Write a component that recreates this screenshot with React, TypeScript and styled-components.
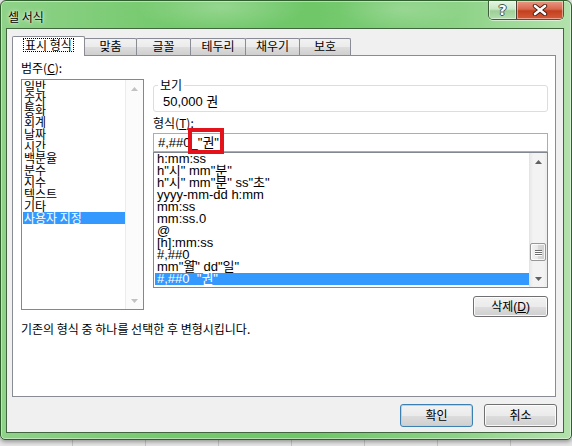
import React from 'react';
import styled, { createGlobalStyle } from 'styled-components';

const GlobalStyle = createGlobalStyle`
  html, body { margin: 0; padding: 0; }
  body {
    width: 572px;
    height: 446px;
    overflow: hidden;
    font-family: "Liberation Sans", "Noto Sans CJK KR", sans-serif;
    font-size: 12px;
    color: #000;
    background: #e6e6e6 repeating-linear-gradient(90deg, transparent 0 72px, #c4c4c4 72px 73px);
  }
`;

const Window = styled.div`
  box-sizing: border-box;
  width: 572px;
  height: 440px;
  display: flex;
  flex-direction: column;
  padding: 0 7px 6px 5px;
  border: 1px solid #2f5f2c;
  border-radius: 6px 6px 5px 5px;
  background:
    radial-gradient(ellipse 120px 36px at 220px 6px, rgba(255, 255, 255, 0.25), transparent 70%),
    radial-gradient(ellipse 90px 30px at 400px 8px, rgba(255, 255, 255, 0.18), transparent 70%),
    linear-gradient(90deg, #8fd289 0%, #74c96c 30%, #6fc768 55%, #8cd286 80%, #b3e2ac 100%);
  box-shadow: inset 0 0 0 1px rgba(255, 255, 255, 0.45), 0 2px 4px rgba(0, 0, 0, 0.35);
`;

const TitleBar = styled.div`
  flex: none;
  height: 27px;
  display: flex;
  align-items: flex-start;
  justify-content: space-between;
`;

const Title = styled.div`
  margin: 9px 0 0 2px;
  line-height: 14px;
  font-family: "Noto Sans CJK KR", sans-serif;
  text-shadow: 0 0 5px rgba(255, 255, 255, 0.95), 0 0 2px rgba(255, 255, 255, 0.9);
`;

const CaptionGroup = styled.div`
  display: flex;
  height: 18px;
  border: 1px solid #3f5d3d;
  border-top: none;
  border-radius: 0 0 5px 5px;
  overflow: hidden;
  box-shadow: 0 1px 0 rgba(255, 255, 255, 0.55);
`;

const CaptionButton = styled.div<{ $close?: boolean }>`
  width: ${p => (p.$close ? 46 : 27)}px;
  display: flex;
  align-items: center;
  justify-content: center;
  border-left: ${p => (p.$close ? '1px solid #4a3a30' : 'none')};
  background: ${p =>
    p.$close
      ? 'linear-gradient(#e99a86 0%, #d9694e 45%, #c2401f 55%, #d65a38 100%)'
      : 'linear-gradient(rgba(255,255,255,0.75) 0%, rgba(235,245,233,0.55) 45%, rgba(160,200,155,0.55) 55%, rgba(190,225,185,0.7) 100%)'};
  box-shadow: inset 0 0 0 1px rgba(255, 255, 255, 0.45);
`;

const HelpMark = styled.span`
  font: bold 14px "DejaVu Sans", sans-serif;
  line-height: 14px;
  color: #fff;
  text-shadow: 1px 0 0 #43573f, -1px 0 0 #43573f, 0 1px 0 #43573f, 0 -1px 0 #43573f;
`;

const Client = styled.div`
  box-sizing: border-box;
  flex: 1;
  display: flex;
  flex-direction: column;
  border: 1px solid #41663f;
  background: #f0f0f0;
  padding: 7px 6px 5px 5px;
`;

const TabStrip = styled.div`
  flex: none;
  height: 19px;
  display: flex;
  align-items: flex-end;
  position: relative;
  z-index: 1;
`;

const Tab = styled.div<{ $w: number; $active?: boolean }>`
  box-sizing: border-box;
  width: ${p => p.$w}px;
  height: ${p => (p.$active ? 20 : 17)}px;
  margin-bottom: ${p => (p.$active ? -1 : 0)}px;
  margin-left: ${p => (p.$active ? 0 : -1)}px;
  position: relative;
  z-index: ${p => (p.$active ? 2 : 1)};
  border: 1px solid #898c95;
  border-bottom: none;
  border-radius: 2px 2px 0 0;
  background: ${p =>
    p.$active ? '#fff' : 'linear-gradient(#f2f2f2 0%, #ebebeb 50%, #dddddd 51%, #cfcfcf 100%)'};
  padding-top: ${p => (p.$active ? 1 : 0)}px;
  text-align: center;
  line-height: 14px;
  font-family: "Noto Sans CJK KR", sans-serif;
  white-space: nowrap;
`;

const FocusLabel = styled.span`
  display: inline-block;
  line-height: 12px;
  padding: 0 1px;
  border: 1px dotted #000;
`;

const Panel = styled.div`
  box-sizing: border-box;
  height: 342px;
  margin-right: 1px;
  border: 1px solid #898c95;
  background: #fff;
  padding: 5px 7px 0 8px;
  display: flex;
  flex-direction: column;
`;

const Label = styled.div<{ $mt?: number }>`
  line-height: 14px;
  margin-top: ${p => p.$mt ?? 0}px;
  font-family: "Noto Sans CJK KR", sans-serif;
  white-space: nowrap;
  u { text-decoration: underline; text-underline-offset: 1px; }
`;

const MainRow = styled.div`
  display: flex;
  align-items: flex-start;
  gap: 9px;
  margin-top: 4px;
`;

const ListBox = styled.div<{ $w: number; $h: number }>`
  box-sizing: border-box;
  width: ${p => p.$w}px;
  height: ${p => p.$h}px;
  border: 1px solid #828790;
  background: #fff;
  display: flex;
  position: relative;
`;

const Items = styled.div<{ $latin?: boolean }>`
  flex: 1;
  min-width: 0;
  font-size: ${p => (p.$latin ? 13 : 12)}px;
  font-family: ${p =>
    p.$latin ? '"Liberation Sans", "Noto Sans CJK KR", sans-serif' : '"Noto Sans CJK KR", sans-serif'};
`;

const Item = styled.div<{ $selected?: boolean; $pad: number }>`
  height: 12px;
  line-height: 11px;
  margin-left: 1px;
  padding-left: ${p => p.$pad}px;
  white-space: nowrap;
  background: ${p => (p.$selected ? '#3399ff' : 'transparent')};
  color: ${p => (p.$selected ? '#fff' : '#000')};
`;

const ScrollBar = styled.div<{ $disabled?: boolean }>`
  flex: none;
  width: 17px;
  display: flex;
  flex-direction: column;
  border-left: 1px solid ${p => (p.$disabled ? '#ececec' : '#e4e4e4')};
  background: ${p =>
    p.$disabled ? '#fbfbfb' : 'linear-gradient(90deg, #e9e9e9 0%, #f3f3f3 20%, #f3f3f3 80%, #ebebeb 100%)'};
`;

const ArrowBox = styled.div`
  flex: none;
  height: 17px;
  display: flex;
  align-items: center;
  justify-content: center;
`;

const Track = styled.div`
  flex: 1;
  display: flex;
  flex-direction: column;
  justify-content: flex-end;
  padding-bottom: 9px;
`;

const Thumb = styled.div`
  box-sizing: border-box;
  height: 18px;
  margin: 0 1px 0 0;
  border: 1px solid #979797;
  border-radius: 2px;
  background: linear-gradient(90deg, #f4f4f4 0%, #e8e8e8 50%, #d9d9d9 51%, #cfcfcf 100%);
  box-shadow: inset 0 0 0 1px rgba(255, 255, 255, 0.8);
  display: flex;
  flex-direction: column;
  align-items: center;
  justify-content: center;
  gap: 1px;
`;

const Grip = styled.div`
  width: 7px;
  height: 1px;
  background: #6e6e6e;
  box-shadow: 0 1px 0 #fff;
`;

const RightColumn = styled.div`
  width: 395px;
  display: flex;
  flex-direction: column;
`;

const GroupBox = styled.fieldset`
  margin: 0;
  padding: 0 0 2px 4px;
  border: 1px solid #d5dfe5;
  border-radius: 3px;
  min-width: 0;
`;

const Legend = styled.legend`
  padding: 0 2px;
  line-height: 12px;
  font-family: "Noto Sans CJK KR", sans-serif;
`;

const Preview = styled.div`
  margin-top: 4px;
  padding-left: 5px;
  line-height: 14px;
  font-size: 13px;
`;

const TextBox = styled.div`
  box-sizing: border-box;
  height: 19px;
  margin-top: 3px;
  border: 1px solid #abadb3;
  background: #fff;
  padding-left: 4px;
  line-height: 17px;
  font-size: 13px;
  white-space: nowrap;
  position: relative;
  z-index: 1;
`;

const Annotation = styled.div`
  position: absolute;
  left: 34px;
  top: -6px;
  width: 36px;
  height: 26px;
  box-sizing: border-box;
  border: 4px solid #e3121b;
`;

const Button = styled.button<{ $w: number; $h: number; $default?: boolean; $mt?: number }>`
  box-sizing: border-box;
  width: ${p => p.$w}px;
  height: ${p => p.$h}px;
  margin-top: ${p => p.$mt ?? 0}px;
  padding: 0;
  align-self: flex-end;
  border: 1px solid ${p => (p.$default ? '#3c7fb1' : '#707070')};
  border-radius: 3px;
  background: linear-gradient(#f2f2f2 0%, #ebebeb 50%, #dddddd 51%, #cfcfcf 100%);
  box-shadow: inset 0 0 0 1px ${p => (p.$default ? '#9fdcf6' : 'rgba(255,255,255,0.85)')};
  font: 12px "Liberation Sans", "Noto Sans CJK KR", sans-serif;
  line-height: 14px;
  color: #000;
  u { text-decoration: underline; text-underline-offset: 1px; }
`;

const Description = styled.div`
  margin-top: 5px;
  line-height: 14px;
  font-family: "Noto Sans CJK KR", sans-serif;
`;

const Footer = styled.div`
  flex: none;
  margin-top: 7px;
  display: flex;
  justify-content: flex-end;
  gap: 11px;
`;

const Arrow = ({ up, color }: { up?: boolean; color: string }) => (
  <svg width="7" height="4" viewBox="0 0 7 4">
    <path d={up ? 'M0 4 L3.5 0 L7 4 Z' : 'M0 0 L3.5 4 L7 0 Z'} fill={color} />
  </svg>
);

const CloseGlyph = () => (
  <svg width="16" height="12" viewBox="0 0 16 12">
    <path d="M3 2 L13 10 M13 2 L3 10" stroke="#4a1c10" strokeWidth="4.4" strokeLinecap="round" />
    <path d="M3 2 L13 10 M13 2 L3 10" stroke="#fff" strokeWidth="2.6" strokeLinecap="round" />
  </svg>
);

const TABS = [
  { label: '표시 형식', w: 73 },
  { label: '맞춤', w: 53 },
  { label: '글꼴', w: 55 },
  { label: '테두리', w: 56 },
  { label: '채우기', w: 55 },
  { label: '보호', w: 52 },
];

const CATEGORIES = [
  '일반', '숫자', '통화', '회계', '날짜', '시간',
  '백분율', '분수', '지수', '텍스트', '기타', '사용자 지정',
];

const FORMATS = [
  'h:mm:ss',
  'h"시" mm"분"',
  'h"시" mm"분" ss"초"',
  'yyyy-mm-dd h:mm',
  'mm:ss',
  'mm:ss.0',
  '@',
  '[h]:mm:ss',
  '#,##0_',
  'mm"월" dd"일"',
  '#,##0_"권"',
];

export default function App() {
  return (
    <>
      <GlobalStyle />
      <Window>
        <TitleBar>
          <Title>셀 서식</Title>
          <CaptionGroup>
            <CaptionButton>
              <HelpMark>?</HelpMark>
            </CaptionButton>
            <CaptionButton $close>
              <CloseGlyph />
            </CaptionButton>
          </CaptionGroup>
        </TitleBar>
        <Client>
          <TabStrip>
            {TABS.map((t, i) => (
              <Tab key={t.label} $w={t.w} $active={i === 0}>
                {i === 0 ? <FocusLabel>{t.label}</FocusLabel> : t.label}
              </Tab>
            ))}
          </TabStrip>
          <Panel>
            <Label>
              범주(<u>C</u>):
            </Label>
            <MainRow>
              <ListBox $w={123} $h={231}>
                <Items>
                  {CATEGORIES.map(c => (
                    <Item key={c} $pad={1} $selected={c === '사용자 지정'}>
                      {c}
                    </Item>
                  ))}
                </Items>
                <ScrollBar $disabled>
                  <ArrowBox>
                    <Arrow up color="#c2c2c2" />
                  </ArrowBox>
                  <Track />
                  <ArrowBox>
                    <Arrow color="#c2c2c2" />
                  </ArrowBox>
                </ScrollBar>
              </ListBox>
              <RightColumn>
                <GroupBox>
                  <Legend>보기</Legend>
                  <Preview>50,000 권</Preview>
                </GroupBox>
                <Label $mt={4}>
                  형식(<u>T</u>):
                </Label>
                <TextBox>
                  #,##0_"권"
                  <Annotation />
                </TextBox>
                <ListBox $w={395} $h={136}>
                  <Items $latin>
                    {FORMATS.map((f, i) => (
                      <Item key={f} $pad={2} $selected={i === FORMATS.length - 1}>
                        {f}
                      </Item>
                    ))}
                  </Items>
                  <ScrollBar>
                    <ArrowBox>
                      <Arrow up color="#606060" />
                    </ArrowBox>
                    <Track>
                      <Thumb>
                        <Grip />
                        <Grip />
                        <Grip />
                      </Thumb>
                    </Track>
                    <ArrowBox>
                      <Arrow color="#606060" />
                    </ArrowBox>
                  </ScrollBar>
                </ListBox>
                <Button $w={75} $h={21} $mt={8}>
                  삭제(<u>D</u>)
                </Button>
              </RightColumn>
            </MainRow>
            <Description>기존의 형식 중 하나를 선택한 후 변형시킵니다.</Description>
          </Panel>
          <Footer>
            <Button $w={73} $h={23} $default>
              확인
            </Button>
            <Button $w={73} $h={23}>
              취소
            </Button>
          </Footer>
        </Client>
      </Window>
    </>
  );
}
